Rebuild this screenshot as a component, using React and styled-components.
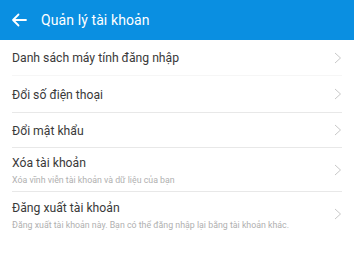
import React from "react";
import styled, { createGlobalStyle } from "styled-components";

const Global = createGlobalStyle`
  html, body { margin: 0; padding: 0; background: #fff; }
  body { font-family: Roboto, "Noto Sans", sans-serif; }
`;

const Page = styled.div`
  width: 354px;
  height: 254px;
  background: #fff;
  overflow: hidden;
`;

const Header = styled.div`
  height: 40px;
  background: #0a8fe1;
  display: flex;
  align-items: center;
  padding-left: 11px;
  gap: 14px;
  color: #fff;
`;

const Title = styled.div`
  font-size: 14px;
  color: #fff;
  letter-spacing: 0.1px;
`;

const List = styled.div`
  display: flex;
  flex-direction: column;
`;

const Row = styled.div`
  height: ${(p) => p.$h}px;
  margin: 0 12px;
  box-sizing: border-box;
  display: flex;
  align-items: center;
  justify-content: space-between;
  border-bottom: 1px solid ${(p) => (p.$last ? "transparent" : p.$faint ? "#f6f6f6" : "#e8e8e8")};
`;

const Texts = styled.div`
  display: flex;
  flex-direction: column;
  gap: 4px;
  padding-top: 1px;
`;

const RowTitle = styled.div`
  font-size: 12.2px;
  color: #3a3a3a;
  line-height: 16px;
`;

const Sub = styled.div`
  font-size: 8.8px;
  color: #b0b0b0;
  line-height: 10px;
`;

const Chevron = () => (
  <svg width="8" height="12" viewBox="0 0 8 12" style={{ marginRight: 0 }}>
    <path d="M1 1 L6.5 6 L1 11" fill="none" stroke="#c8c8c8" strokeWidth="1" />
  </svg>
);

const Back = () => (
  <svg width="16" height="14" viewBox="0 0 16 14">
    <path d="M15 7 H2 M7.5 1.5 L2 7 L7.5 12.5" fill="none" stroke="#fff" strokeWidth="1.8" strokeLinecap="round" strokeLinejoin="round" />
  </svg>
);

const items = [
  { t: "Danh sách máy tính đăng nhập", h: 36, faint: true },
  { t: "Đổi số điện thoại", h: 37 },
  { t: "Đổi mật khẩu", h: 35 },
  { t: "Xóa tài khoản", s: "Xóa vĩnh viễn tài khoản và dữ liệu của bạn", h: 44 },
  { t: "Đăng xuất tài khoản", s: "Đăng xuất tài khoản này. Bạn có thể đăng nhập lại bằng tài khoản khác.", h: 45, last: true },
];

export default function App() {
  return (
    <Page>
      <Global />
      <Header>
        <Back />
        <Title>Quản lý tài khoản</Title>
      </Header>
      <List>
        {items.map((it) => (
          <Row key={it.t} $h={it.h} $last={it.last} $faint={it.faint}>
            <Texts>
              <RowTitle>{it.t}</RowTitle>
              {it.s && <Sub>{it.s}</Sub>}
            </Texts>
            <Chevron />
          </Row>
        ))}
      </List>
    </Page>
  );
}
